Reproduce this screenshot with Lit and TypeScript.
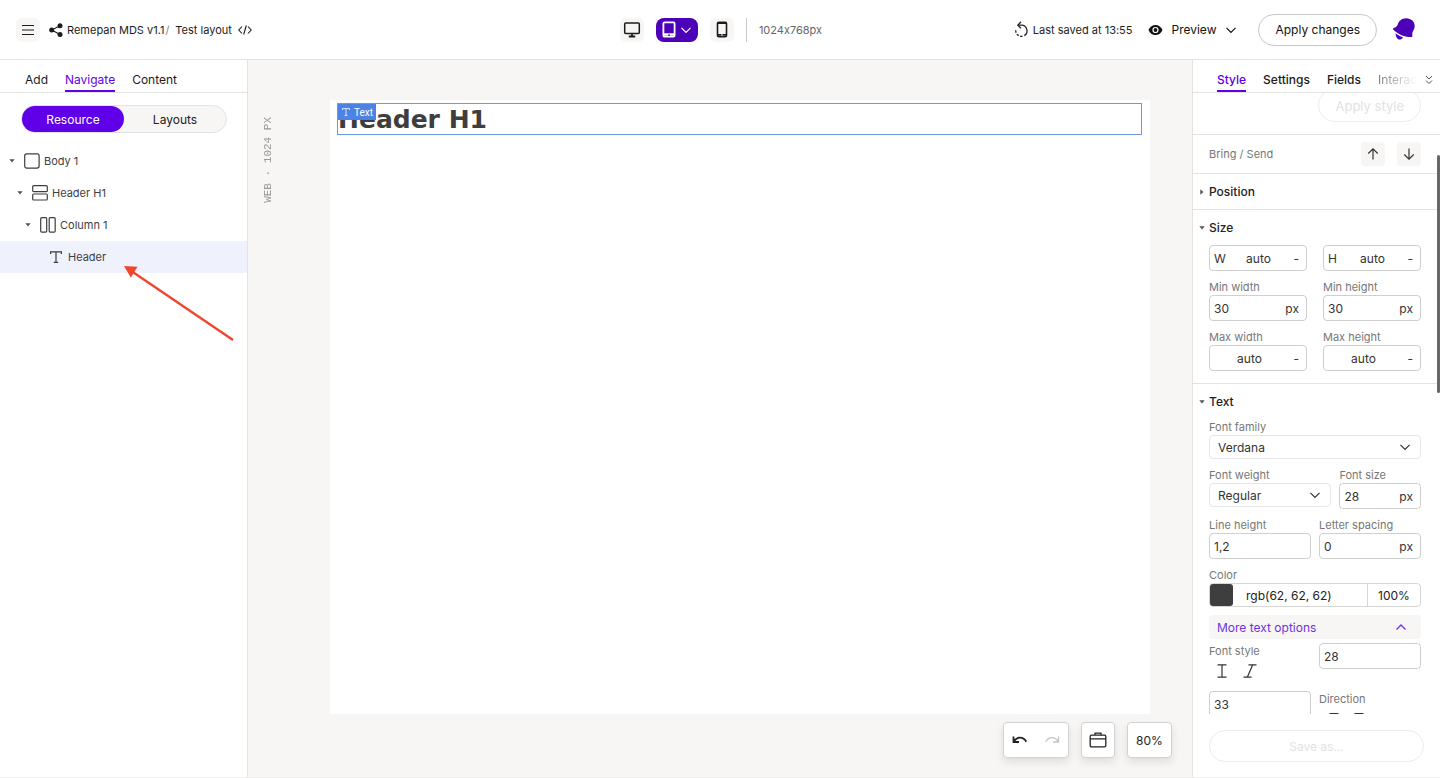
import { LitElement, html, css, svg, nothing } from "lit";
import { customElement, state } from "lit/decorators.js";
import { classMap } from "lit/directives/class-map.js";

const chevronDown = html`<svg class="chev" viewBox="0 0 12 12" width="12" height="12" aria-hidden="true">
  <path d="M1.500 3.800 6 8.300 10.500 3.800" fill="none" stroke="currentColor" stroke-width="1.2" />
</svg>`;

const icon = (w: number, h: number, body: unknown) =>
  html`<svg width=${w} height=${h} viewBox="0 0 ${w} ${h}" fill="none" stroke="currentColor" aria-hidden="true">${body}</svg>`;

const icons = {
  menu: icon(14, 14, svg`<path d="M1 2.5h12M1 7h12M1 11.5h12" stroke-width="1.1"/>`),
  share: icon(14, 14, svg`<g fill="currentColor" stroke="none"><circle cx="2.7" cy="7" r="2.5"/><circle cx="11" cy="2.7" r="2.5"/><circle cx="11" cy="11.4" r="2.5"/></g><path d="M11 2.7 2.7 7 11 11.4" stroke-width="1.1"/>`),
  code: icon(14, 10, svg`<path d="M4 1.5.8 5 4 8.500M10 1.500 13.200 5 10 8.500M8.300.5 5.700 9.500" stroke-width="1.1"/>`),
  desktop: icon(18, 16, svg`<rect x="1.700" y="1" width="14.600" height="10.500" rx="1" stroke-width="1.500"/><path d="M9 11v3.500M5.800 14.500h6.400" stroke-width="1.800"/>`),
  tablet: icon(14, 17, svg`<rect x="1.400" y="1.400" width="11.200" height="14.200" rx="1.200" stroke-width="1.800"/><path d="M1.400 13.500h11.200" stroke-width="2.400"/><circle cx="7" cy="14.200" r=".9" fill="#4c00b8" stroke="none"/>`),
  phone: icon(12, 17, svg`<rect x="1.500" y="1.300" width="9" height="14.400" rx="1.300" stroke-width="1.600"/><path d="M1.500 13.800h9M1.500 2.200h9" stroke-width="1.800"/><circle cx="6" cy="14" r=".8" fill="#fff" stroke="none"/>`),
  saved: icon(15, 17, svg`<path d="M4 4.200h3.500a5.600 5.600 0 0 1 2.800 10.400" stroke-width="1.300"/><path d="M7 .8 3.800 4.200 7 7.300" stroke-width="1.300"/><path d="M8.500 15.300a5.800 5.800 0 0 1-6.700-6.600" stroke-width="1.300" stroke-dasharray="2.400 1.500"/>`),
  eye: icon(15, 12, svg`<path d="M7.500 1C4.300 1 1.700 3 .5 6c1.200 3 3.800 5 7 5s5.800-2 7-5c-1.200-3-3.800-5-7-5Z" fill="currentColor" stroke="none"/><circle cx="7.500" cy="6" r="3.100" fill="#fff" stroke="none"/><circle cx="7.500" cy="6" r="1.900" fill="currentColor" stroke="none"/>`),
  bell: icon(24, 24, svg`<g fill="#4c00b8" stroke="none"><path d="M14 .2C19.500.2 22.800 3.800 22.700 8.300c-.1 3.200-1.900 4.700-2.400 6.600-.1 1.200.2 2.400-.2 4.100-6.100.6-13.600-2-18.900-7.500-.4-.8-.1-1.400.5-1.500 2.100-.5 3.200-1.500 3.900-3.200C6.700 3 9.700.2 14 .2Z"/><path d="M3.600 15.300C5.500 17 8 18.300 11 19.200 10 21.500 7.800 22 6.200 21.200 4.500 20.400 3.500 17.800 3.600 15.300Z"/></g>`),
  body: icon(16, 16, svg`<rect x=".7" y=".9" width="14.400" height="14.200" rx="2" stroke-width="1.200"/>`),
  section: icon(16, 16, svg`<rect x=".7" y=".7" width="14.600" height="6" rx="1" stroke-width="1.200"/><rect x=".7" y="9" width="14.600" height="6" rx="1" stroke-width="1.200"/>`),
  column: icon(16, 16, svg`<rect x=".7" y=".7" width="6" height="14.400" rx="1" stroke-width="1.200"/><rect x="9.200" y=".7" width="6" height="14.400" rx="1" stroke-width="1.200"/>`),
  text: icon(12, 12, svg`<path d="M.6 3V.8h10.800V3M6 .8v10.400M3.800 11.300h4.400" stroke-width="1.200"/>`),
  textSmall: icon(8, 8, svg`<path d="M.5 2V.6h7V2M4 .6v6.800M2.500 7.400h3" stroke-width=".8"/>`),
  caretDown: icon(6, 4, svg`<path d="M.3.300h5.400L3 3.500Z" fill="currentColor" stroke="none"/>`),
  caretRight: icon(4, 6, svg`<path d="M.3.300v5.400L3.500 3Z" fill="currentColor" stroke="none"/>`),
  up: icon(12, 12, svg`<path d="M6 11.500V1M1.300 5.500 6 .9l4.700 4.600" stroke-width="1.200"/>`),
  down: icon(12, 12, svg`<path d="M6 .5V11M1.300 6.500 6 11.100l4.700-4.600" stroke-width="1.200"/>`),
  chevUp: icon(12, 12, svg`<path d="M1.500 8.500 6 4l4.500 4.500" stroke-width="1.300"/>`),
  double: icon(8, 10, svg`<path d="M1 1l3 3 3-3M1 5.500l3 3 3-3" stroke-width="1"/>`),
  upright: icon(12, 14, svg`<path d="M1.500.800h9M1.500 13.200h9M6 .8v12.400" stroke-width="1.200"/>`),
  italic: icon(14, 14, svg`<path d="M5.500.800h8M.5 13.200h8M9.700.800 4.300 13.200" stroke-width="1.200"/>`),
  lineH: icon(10, 14, svg`<path d="M.5 1.500h9M5 1.500v12" stroke-width="1.200"/>`),
  undo: icon(16, 12, svg`<path d="M1.500 2.500v5.500h5.500M1.700 7.700C4.500 2.800 11 1.800 14.300 7.800" stroke-width="1.800"/>`),
  redo: icon(16, 12, svg`<path d="M14.500 2.500v5.500H9M14.300 7.700C11.500 2.800 5 1.800 1.700 7.800" stroke-width="1.300"/>`),
  box: icon(18, 16, svg`<rect x="1.200" y="3.200" width="15.600" height="11.600" rx="1.200" stroke-width="1.300"/><path d="M1.200 6.800h15.600M6 3V1.200h6V3" stroke-width="1.200"/>`),
};

interface TreeItem {
  label: string;
  depth: number;
  glyph: unknown;
  leaf?: boolean;
}

const tree: TreeItem[] = [
  { label: "Body 1", depth: 0, glyph: icons.body },
  { label: "Header H1", depth: 1, glyph: icons.section },
  { label: "Column 1", depth: 2, glyph: icons.column },
  { label: "Header", depth: 3, glyph: icons.text, leaf: true },
];

const shared = css`
  :host, * { box-sizing: border-box; }
  svg { display: block; flex: none; }
  button, input, select { font: inherit; color: inherit; margin: 0; padding: 0; border: 0; background: none; }
  button { cursor: pointer; }
  .tabs { display: flex; gap: 17px; height: 33px; border-bottom: 1px solid #e4e3e3; flex: none; }
  .tab { height: 32px; padding-top: 10px; font-size: 12px; line-height: 20px; color: #1c1c1c; border-bottom: 2px solid transparent; white-space: nowrap; }
  .tab.on { color: #5f00e8; border-bottom-color: #5f00e8; }
`;

@customElement("top-bar")
export class TopBar extends LitElement {
  static styles = [shared, css`
    :host { display: grid; grid-template-columns: 1fr auto 1fr; align-items: center; height: 60px; flex: none; border-bottom: 1px solid #e4e3e3; background: #fff; }
    .group { display: flex; align-items: center; }
    .left { padding-left: 16px; font-size: 11px; color: #1c1c1c; }
    .sq { width: 24px; height: 24px; border-radius: 6px; background: #f7f6f5; display: grid; place-items: center; }
    .share { margin: 0 4px 0 9px; }
    .crumb { color: inherit; text-decoration: none; white-space: nowrap; }
    .slash { color: #888; margin: 0 6px 0 1px; }
    .code { margin-left: 6px; }
    .mid { gap: 12px; padding-left: 2px; font-size: 11px; color: #666; }
    .mid button { color: #1c1c1c; }
    .mid .tablet { width: 42px; height: 24px; border-radius: 8px; background: #4c00b8; color: #fff; display: flex; align-items: center; justify-content: center; gap: 4px; }
    .bar { width: 1px; height: 24px; background: #c9c9c9; }
    .right { justify-content: flex-end; padding-right: 24px; font-size: 11px; color: #222; white-space: nowrap; }
    .saved { gap: 4px; margin-right: 16px; }
    .preview { display: flex; align-items: center; font-size: 12px; gap: 8px; margin-right: 21px; color: #111; }
    .preview .chev { margin-left: 1px; }
    .apply { height: 32px; padding: 0 16px; border: 1px solid #c9c9c9; border-radius: 16px; font-size: 12px; color: #111; margin-right: 15px; }
  `];

  render() {
    return html`
      <div class="group left">
        <button class="sq" aria-label="Menu">${icons.menu}</button>
        <span class="share">${icons.share}</span>
        <a class="crumb" href="#project">Remepan MDS v1.1</a><span class="slash">/</span>
        <a class="crumb" href="#layout">Test layout</a>
        <span class="code">${icons.code}</span>
      </div>
      <div class="group mid">
        <button class="sq" aria-label="Desktop">${icons.desktop}</button>
        <button class="tablet" aria-label="Tablet">${icons.tablet}${chevronDown}</button>
        <button class="sq" aria-label="Phone">${icons.phone}</button>
        <span class="bar"></span>
        <span>1024x768px</span>
      </div>
      <div class="group right">
        <span class="group saved">${icons.saved}Last saved at 13:55</span>
        <button class="preview">${icons.eye}Preview${chevronDown}</button>
        <button class="apply">Apply changes</button>
        <button aria-label="Notifications">${icons.bell}</button>
      </div>`;
  }
}

@customElement("navigator-panel")
export class NavigatorPanel extends LitElement {
  static styles = [shared, css`
    :host { display: block; position: relative; width: 248px; flex: none; background: #fff; border-right: 1px solid #e4e3e3; }
    .tabs { padding-left: 25px; }
    .seg { display: flex; margin: 12px 20px 12px 21px; height: 28px; border: 1px solid #e4e3e3; border-radius: 14px; background: #f7f6f5; }
    .seg button { flex: 1; border-radius: 13px; font-size: 12px; color: #222; }
    .seg .on { background: #5f00e8; color: #fff; }
    .row { display: flex; align-items: center; width: 100%; height: 32px; font-size: 11px; color: #3e3e3e; text-align: left; }
    .row.on { background: #eff2fc; }
    .d0 { padding-left: 9px; }
    .d1 { padding-left: 17px; }
    .d2 { padding-left: 25px; }
    .d3 { padding-left: 48px; }
    .caret { margin-right: 9px; color: #555; }
    .glyph { width: 16px; display: grid; place-items: center; margin-right: 4px; }
    .arrow { position: absolute; left: 120px; top: 200px; pointer-events: none; }
  `];

  @state() private selected = 3;

  render() {
    return html`
      <nav class="tabs">
        <button class="tab">Add</button>
        <button class="tab on">Navigate</button>
        <button class="tab">Content</button>
      </nav>
      <div class="seg"><button class="on">Resource</button><button>Layouts</button></div>
      ${tree.map((t, i) => html`
        <button class=${classMap({ row: true, on: i === this.selected, [`d${t.depth}`]: true })} @click=${() => { this.selected = i; }}>
          ${t.leaf ? nothing : html`<span class="caret">${icons.caretDown}</span>`}
          <span class="glyph">${t.glyph}</span>${t.label}
        </button>`)}
      <svg class="arrow" width="120" height="84" viewBox="0 0 120 84" aria-hidden="true">
        <path d="M113 80 12 11.500" stroke="#f0452b" stroke-width="2.300" fill="none" />
        <path d="M4 6 17.500 6.700 10.800 17.600Z" fill="#f0452b" />
      </svg>`;
  }
}

@customElement("layout-canvas")
export class LayoutCanvas extends LitElement {
  static styles = [shared, css`
    :host { display: flex; flex-direction: column; flex: 1; min-width: 0; background: #f7f6f5; color: #222; }
    .work { display: flex; flex: 1; padding: 40px 42px 0 0; }
    .gutter { width: 82px; flex: none; padding: 17px 0 0 12px; }
    .ruler { writing-mode: vertical-rl; transform: rotate(180deg); font: 11px/16px "Liberation Mono", monospace; color: #999; white-space: nowrap; }
    .board { flex: 1; background: #fff; padding: 3px 8px 0 7px; }
    .item { position: relative; height: 32px; border: 1px solid #6d98e6; }
    .title { margin: 0; font: bold 25px/32px "DejaVu Sans", Verdana, sans-serif; color: #3e3e3e; }
    .tag { position: absolute; left: 0; top: 0; display: flex; align-items: center; gap: 4px; height: 16px; padding: 0 3px 0 4px; background: #4d82e6; color: #fff; font-family: Roboto, sans-serif; font-size: 10px; }
    .tools { display: flex; justify-content: flex-end; gap: 12px; padding: 8px 20px 19px; }
    .card { display: flex; align-items: center; justify-content: center; height: 36px; min-width: 34px; border: 1px solid #d3d2d2; border-radius: 4px; background: #fff; box-shadow: 0 4px 8px rgba(0, 0, 0, .1); font-size: 12px; }
    .pair { gap: 16px; width: 66px; }
    .faint { color: #c4c4c4; }
    .zoom { width: 45px; }
  `];

  render() {
    return html`
      <div class="work">
        <div class="gutter"><div class="ruler">WEB · 1024 PX</div></div>
        <div class="board">
          <div class="item">
            <h1 class="title">Header H1</h1>
            <span class="tag">${icons.textSmall}Text</span>
          </div>
        </div>
      </div>
      <div class="tools">
        <div class="card pair">
          <button aria-label="Undo">${icons.undo}</button>
          <button class="faint" aria-label="Redo">${icons.redo}</button>
        </div>
        <button class="card" aria-label="Assets">${icons.box}</button>
        <button class="card zoom">80%</button>
      </div>`;
  }
}

@customElement("style-panel")
export class StylePanel extends LitElement {
  static styles = [shared, css`
    :host { display: flex; flex-direction: column; position: relative; width: 248px; flex: none; min-height: 0; background: #fff; border-left: 1px solid #e4e3e3; color: #333; font-size: 12px; }
    .tabs { padding-left: 24px; align-items: flex-start; }
    .tab { font-weight: 500; flex: none; }
    .fade { background: linear-gradient(90deg, #777, #fff); -webkit-background-clip: text; background-clip: text; color: transparent; font-weight: 400; }
    .more { display: flex; align-items: center; flex: none; height: 32px; padding-top: 8px; margin-left: -9px; color: #555; }
    .scroll { flex: 1; min-height: 0; overflow: hidden; }
    .cell { padding: 0 19px 0 16px; border-bottom: 1px solid #e4e3e3; }
    .applyrow { display: flex; justify-content: flex-end; margin-top: -4px; padding-bottom: 12px; }
    .ghost { height: 33px; border: 1px solid #ececec; border-radius: 17px; color: #e2e2e0; font-size: 12px; padding: 0 16px; }
    .applyrow .ghost { font-size: 13px; }
    .bring { display: flex; align-items: center; gap: 12px; height: 39px; font-size: 11px; color: #777; }
    .grow { flex: 1; }
    .sq { width: 24px; height: 24px; border-radius: 4px; background: #f7f6f5; color: #333; display: grid; place-items: center; }
    .head { display: flex; align-items: center; gap: 4px; width: 100%; height: 35px; margin-left: -11px; font-weight: 500; color: #222; }
    .head span { width: 7px; display: grid; place-items: center; color: #555; }
    .size { padding-bottom: 12px; }
    .grid { display: grid; grid-template-columns: 1fr 1fr; gap: 8px; }
    .wide { column-gap: 16px; }
    .weights { grid-template-columns: 3fr 2fr; }
    .stack { display: flex; flex-direction: column; gap: 8px; }
    .field { display: block; min-width: 0; }
    .cap { display: block; font-size: 11px; line-height: 16px; color: #777; white-space: nowrap; }
    .box { display: flex; align-items: center; height: 26px; border: 1px solid #cfcfcf; border-radius: 4px; padding: 0 7px 0 4px; font-size: 12px; }
    .box input { flex: 1; min-width: 0; width: 0; height: 24px; outline: none; }
    .mid input { text-align: center; }
    .pre { width: 18px; }
    .suf { width: 14px; text-align: right; white-space: nowrap; display: flex; justify-content: flex-end; }
    .sel { position: relative; display: block; color: #333; }
    .sel select { appearance: none; width: 100%; height: 24px; padding: 0 8px; border: 1px solid #e6e6e6; border-radius: 4px; display: block; background: #fff; }
    .sel svg { position: absolute; right: 10px; top: 6px; pointer-events: none; }
    .color { display: flex; height: 24px; border: 1px solid #d6d6d6; border-radius: 4px; }
    .swatch { width: 23px; background: #3e3e3e; border-radius: 3px; }
    .color input { min-width: 0; width: 0; outline: none; color: #222; }
    .rgb { flex: 1; padding: 0 0 0 13px; }
    .color .alpha { width: 53px; border-left: 1px solid #d6d6d6; text-align: center; }
    .options { display: flex; align-items: center; justify-content: space-between; height: 24px; padding: 0 14px 0 8px; border-radius: 4px; background: #f7f6f5; color: #6a35e0; }
    .after { margin-top: -4px; align-items: start; }
    .glyphs { display: flex; align-items: center; gap: 15px; height: 24px; padding-left: 7px; }
    .dir { padding-left: 10px; }
    .foot { padding: 16px 16px 15px; flex: none; }
    .foot .ghost { display: block; width: 100%; height: 32px; }
    .thumb { position: absolute; right: 0; top: 95px; width: 3px; height: 238px; border-radius: 2px; background: #6b6765; }
  `];

  private field(o: { cap?: string; name?: string; value: string; pre?: string; suf?: string; mid?: boolean }) {
    return html`<label class="field">
      ${o.cap ? html`<span class="cap">${o.cap}</span>` : nothing}
      <span class="box ${o.mid ? "mid" : ""}">
        ${o.pre ? html`<span class="pre">${o.pre}</span>` : nothing}
        <input type="text" aria-label=${o.name ?? nothing} .value=${o.value} />
        ${o.suf ? html`<span class="suf">${o.suf}</span>` : nothing}
      </span>
    </label>`;
  }

  private select(cap: string, value: string, others: string[]) {
    return html`<label class="field">
      <span class="cap">${cap}</span>
      <span class="sel"><select><option selected>${value}</option>${others.map((v) => html`<option>${v}</option>`)}</select>${chevronDown}</span>
    </label>`;
  }

  render() {
    return html`
      <nav class="tabs">
        <button class="tab on">Style</button>
        <button class="tab">Settings</button>
        <button class="tab">Fields</button>
        <button class="tab fade">Interac</button>
        <button class="more" aria-label="More tabs">${icons.double}</button>
      </nav>
      <div class="scroll">
        <div class="cell applyrow"><button class="ghost" disabled>Apply style</button></div>
        <div class="cell bring">
          <span class="grow">Bring / Send</span>
          <button class="sq" aria-label="Bring forward">${icons.up}</button>
          <button class="sq" aria-label="Send backward">${icons.down}</button>
        </div>
        <div class="cell"><button class="head"><span>${icons.caretRight}</span>Position</button></div>
        <div class="cell size">
          <button class="head"><span>${icons.caretDown}</span>Size</button>
          <div class="grid wide">
            ${this.field({ value: "auto", pre: "W", suf: "-", mid: true })}
            ${this.field({ value: "auto", pre: "H", suf: "-", mid: true })}
            ${this.field({ cap: "Min width", value: "30", suf: "px" })}
            ${this.field({ cap: "Min height", value: "30", suf: "px" })}
            ${this.field({ cap: "Max width", value: "auto", suf: "-", mid: true })}
            ${this.field({ cap: "Max height", value: "auto", suf: "-", mid: true })}
          </div>
        </div>
        <div class="cell">
          <button class="head"><span>${icons.caretDown}</span>Text</button>
          <div class="stack">
            ${this.select("Font family", "Verdana", ["Arial", "Georgia"])}
            <div class="grid weights">
              ${this.select("Font weight", "Regular", ["Bold"])}
              ${this.field({ cap: "Font size", value: "28", suf: "px" })}
            </div>
            <div class="grid">
              ${this.field({ cap: "Line height", value: "1,2" })}
              ${this.field({ cap: "Letter spacing", value: "0", suf: "px" })}
            </div>
            <div>
              <label class="cap" for="rgb">Color</label>
              <div class="color">
                <span class="swatch"></span>
                <input class="rgb" id="rgb" type="text" value="rgb(62, 62, 62)" />
                <input class="alpha" type="text" aria-label="Opacity" value="100%" />
              </div>
            </div>
            <button class="options">More text options${icons.chevUp}</button>
            <div class="grid after">
              <div>
                <span class="cap">Font style</span>
                <div class="glyphs">
                  <button aria-label="Upright">${icons.upright}</button>
                  <button aria-label="Italic">${icons.italic}</button>
                </div>
              </div>
              ${this.field({ name: "Indent", value: "28" })}
              ${this.field({ name: "Spacing", value: "33" })}
              <div>
                <span class="cap">Direction</span>
                <div class="glyphs dir">
                  <button aria-label="Left to right">${icons.lineH}</button>
                  <button aria-label="Right to left">${icons.lineH}</button>
                </div>
              </div>
            </div>
          </div>
        </div>
      </div>
      <div class="foot"><button class="ghost" disabled>Save as...</button></div>
      <span class="thumb"></span>`;
  }
}

@customElement("app-root")
export class AppRoot extends LitElement {
  static styles = css`
    :host { display: flex; flex-direction: column; height: 100vh; box-sizing: border-box; border-bottom: 1px solid #efeeed; background: #fff; font-family: Inter, "Open Sans", sans-serif; font-feature-settings: "calt" 0; overflow: hidden; }
    .main { display: flex; flex: 1; min-height: 0; }
  `;

  render() {
    return html`
      <top-bar></top-bar>
      <div class="main">
        <navigator-panel></navigator-panel>
        <layout-canvas></layout-canvas>
        <style-panel></style-panel>
      </div>`;
  }
}
